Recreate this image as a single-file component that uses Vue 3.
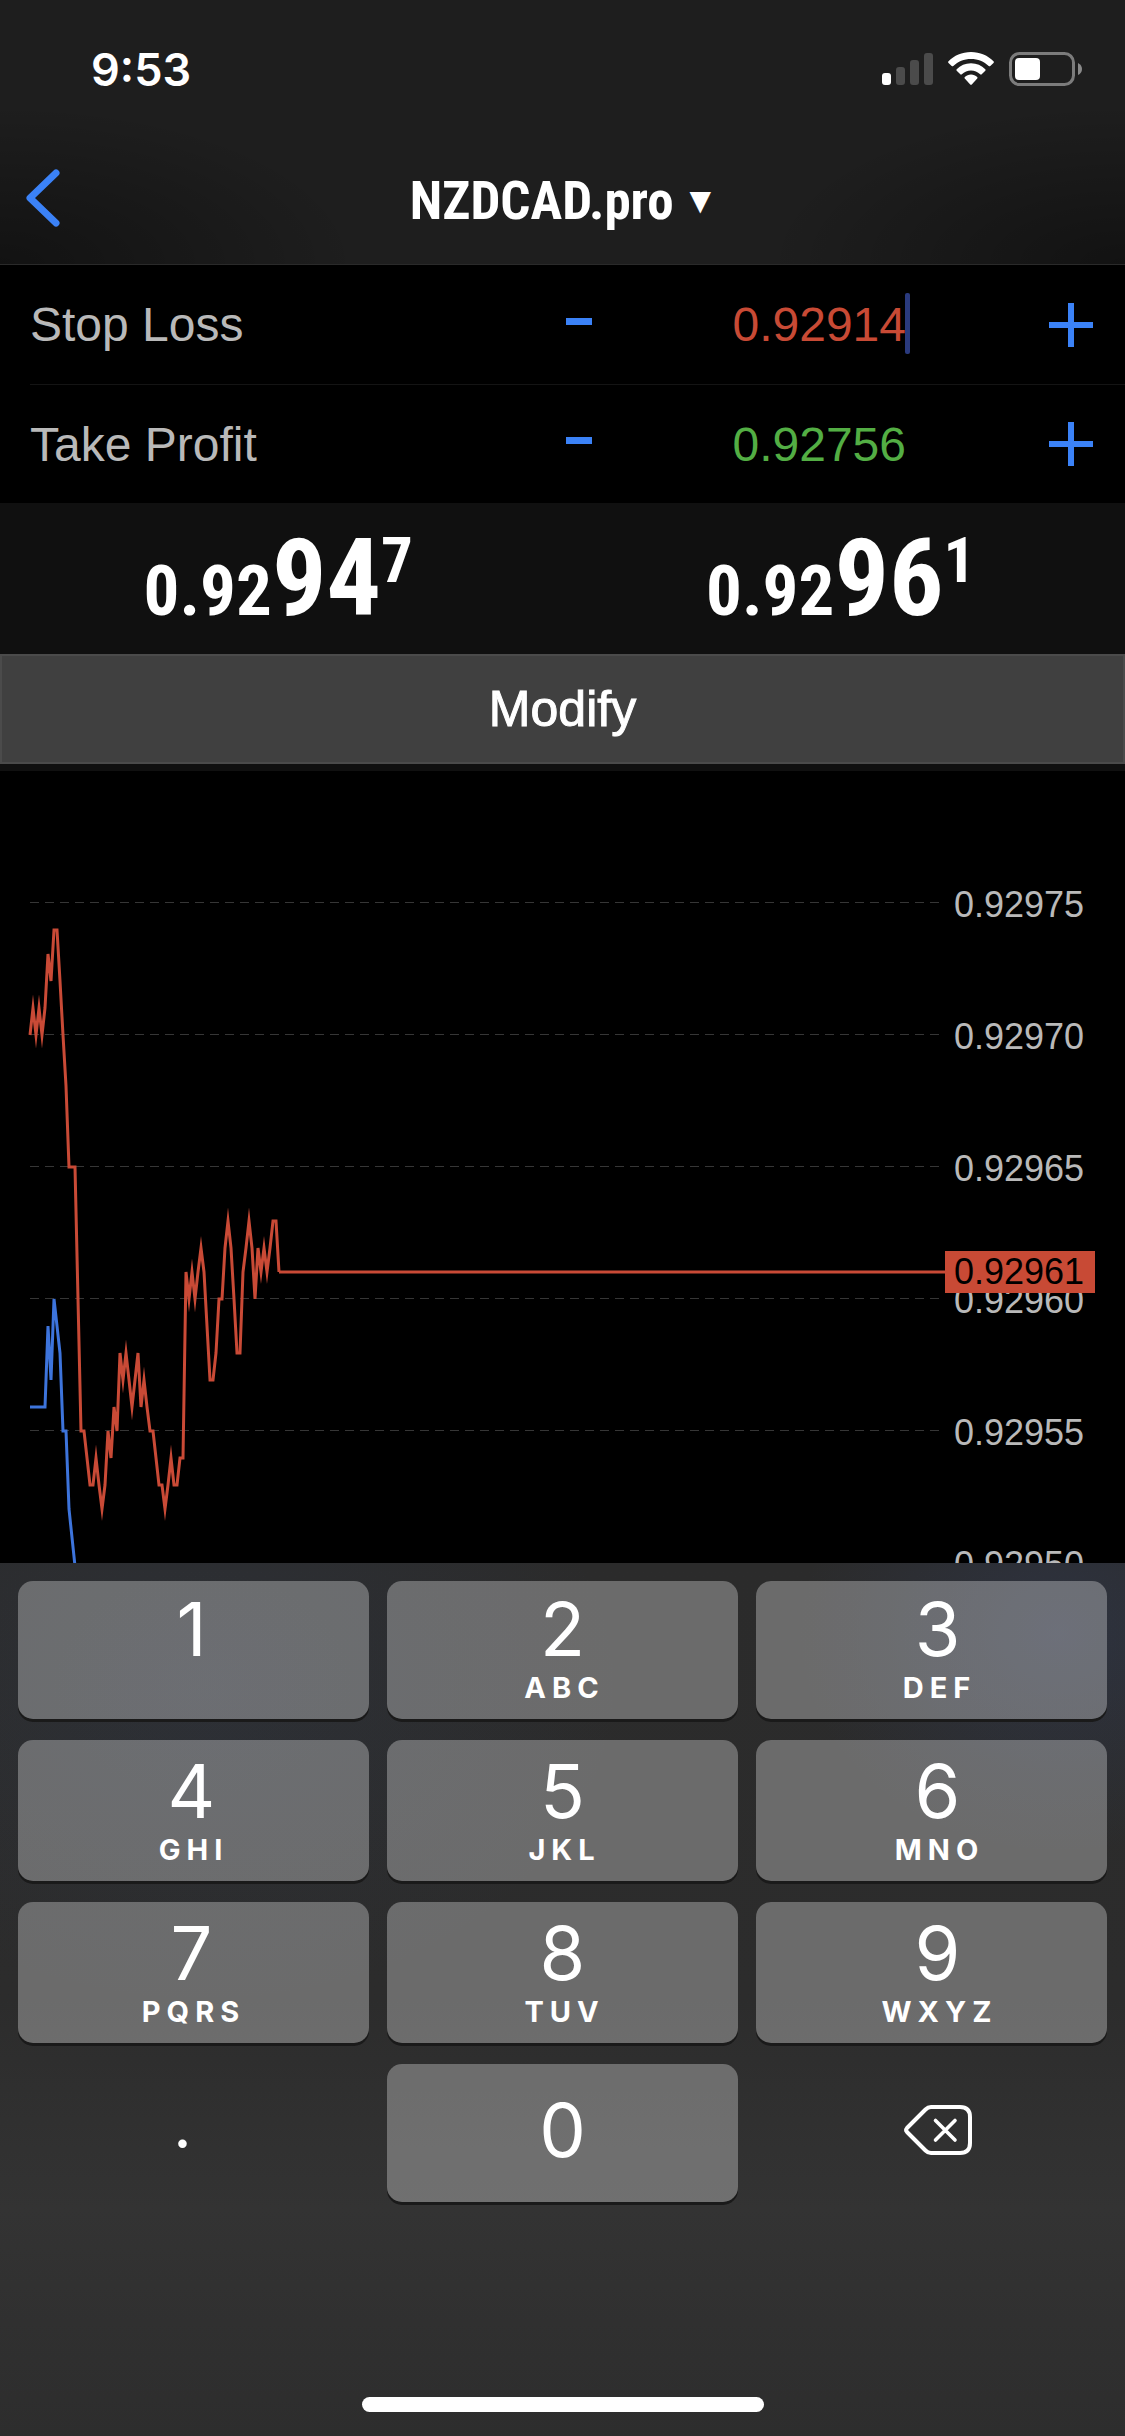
<script setup>
import { ref } from 'vue'

const stopLoss = ref('0.92914')
const takeProfit = ref('0.92756')

const STEP = 0.00001
const shift = (value, by) => (Number(value) + by * STEP).toFixed(5)

const quotes = [
  { side: 'Bid', base: '0.92', big: '94', pip: '7' },
  { side: 'Ask', base: '0.92', big: '96', pip: '1' },
]

const axis = ['0.92975', '0.92970', '0.92965', '0.92960', '0.92955', '0.92950']
const gridLines = [131, 263, 395, 527, 659]

// Vertical position inside the plot for each price level (last two digits).
const levels = {
  46: 900, 50: 795, 52: 738, 53: 714, 54: 687, 55: 660, 56: 636, 57: 609, 58: 582, 59: 555, 60: 528,
  61: 501, 62: 477, 63: 450, 65: 396, 68: 315, 70: 264, 71: 237, 72: 210, 73: 183, 74: 159,
}
const toPoints = (ticks) =>
  ticks
    .map((level, i) => (level === null ? null : `${i * 3},${levels[level]}`))
    .filter(Boolean)
    .join(' ')

const askTicks = [
  70, 71, 70, 71, 70, 71, 73, 72, 74, 74, 72, 70, 68, 65, null, 65, null, 55, 55, 54, 53, 53, 54, 53, 52, 53,
  55, 54, 56, 55, 58, 57, 58, 57, 56, 57, 58, 56, 57, 56, 55, 55, 54, 53, 53, 52, 53, 54, 53, 53, 54, 54,
  61, 60, 61, 60, 61, 62, 61, 59, 57, 57, 58, 60, 60, 62, 63, 62, 60, 58, 58, 61, 62, 63, 62, 60, 62, 61,
  62, 61, 62, 63, 63, 61,
]
const bidTicks = [56, null, null, null, null, 56, 59, 57, 60, 59, 58, 55, 55, 52, null, 50]

const askPoints = toPoints(askTicks)
const bidPoints = toPoints(bidTicks)

const keys = [
  { digit: '1', letters: '' },
  { digit: '2', letters: 'ABC' },
  { digit: '3', letters: 'DEF' },
  { digit: '4', letters: 'GHI' },
  { digit: '5', letters: 'JKL' },
  { digit: '6', letters: 'MNO' },
  { digit: '7', letters: 'PQRS' },
  { digit: '8', letters: 'TUV' },
  { digit: '9', letters: 'WXYZ' },
]

const type = (char) => {
  stopLoss.value += char
}
const erase = () => {
  stopLoss.value = stopLoss.value.slice(0, -1)
}
</script>

<template>
  <div class="screen">
    <header class="top">
      <div class="status">
        <span class="time">9:53</span>
        <div class="indicators">
          <svg width="51" height="34" viewBox="0 0 51 34" aria-label="Signal">
            <rect x="0" y="21" width="9" height="12" rx="3" fill="#fff" />
            <rect x="14" y="15" width="9" height="18" rx="3" fill="#4b4b4b" />
            <rect x="28" y="8" width="9" height="25" rx="3" fill="#4b4b4b" />
            <rect x="42" y="1" width="9" height="32" rx="3" fill="#4b4b4b" />
          </svg>
          <svg width="46" height="34" viewBox="0 0 46 34" aria-label="Wi-Fi" fill="#fff">
            <path d="M23 0C32 0 40 3.600 45.500 9.200Q46.300 10 45.500 10.900L42.300 14Q41.500 14.700 40.700 14C36 9.600 30 7 23 7S10 9.600 5.300 14Q4.500 14.700 3.700 14L.5 10.900Q-.3 10 .5 9.200C6 3.600 14 0 23 0Z" />
            <path d="M23 11.200C28.700 11.200 33.600 13.400 37.300 17.200Q38 18 37.300 18.800L33.700 22.300Q33 23 32.200 22.300C29.600 20 26.500 18.600 23 18.600S16.400 20 13.800 22.300Q13 23 12.300 22.300L8.700 18.800Q8 18 8.700 17.200C12.400 13.400 17.300 11.200 23 11.200Z" />
            <path d="M23 22.600C25.500 22.600 27.500 23.500 29.200 25Q29.900 25.700 29.200 26.500L23.800 32.400Q23 33.200 22.200 32.400L16.800 26.500Q16.100 25.700 16.800 25C18.500 23.500 20.500 22.600 23 22.600Z" />
          </svg>
          <svg width="73" height="34" viewBox="0 0 73 34" aria-label="Battery">
            <rect x="1.500" y="1.500" width="63" height="31" rx="9" fill="none" stroke="#7c7c7c" stroke-width="3" />
            <rect x="6" y="6" width="25" height="22" rx="4" fill="#fff" />
            <path d="M69 11Q73 13 73 17T69 23Z" fill="#8a8a8a" />
          </svg>
        </div>
      </div>
      <nav class="nav">
        <button class="back" type="button" aria-label="Back">
          <svg width="34" height="58" viewBox="0 0 34 58">
            <path d="M30 4L4 29L30 54" fill="none" stroke="#3b82f7" stroke-width="7" stroke-linecap="round" stroke-linejoin="round" />
          </svg>
        </button>
        <button class="symbol" type="button">NZDCAD.pro <span class="arrow">▼</span></button>
      </nav>
    </header>

    <form class="order" @submit.prevent>
      <div class="row">
        <label for="stop-loss">Stop Loss</label>
        <button class="step" type="button" aria-label="Decrease stop loss" @click="stopLoss = shift(stopLoss, -1)">
          <svg width="44" height="44" viewBox="0 0 44 44"><rect x="9" y="15" width="26" height="7" fill="#3b82f7" /></svg>
        </button>
        <div class="field">
          <input id="stop-loss" v-model="stopLoss" class="loss" inputmode="decimal" />
          <span class="caret"></span>
        </div>
        <button class="step" type="button" aria-label="Increase stop loss" @click="stopLoss = shift(stopLoss, 1)">
          <svg width="44" height="44" viewBox="0 0 44 44"><path d="M22 0V44M0 22H44" stroke="#3b82f7" stroke-width="6" /></svg>
        </button>
      </div>
      <div class="row">
        <label for="take-profit">Take Profit</label>
        <button class="step" type="button" aria-label="Decrease take profit" @click="takeProfit = shift(takeProfit, -1)">
          <svg width="44" height="44" viewBox="0 0 44 44"><rect x="9" y="15" width="26" height="7" fill="#3b82f7" /></svg>
        </button>
        <div class="field">
          <input id="take-profit" v-model="takeProfit" class="profit" inputmode="decimal" />
        </div>
        <button class="step" type="button" aria-label="Increase take profit" @click="takeProfit = shift(takeProfit, 1)">
          <svg width="44" height="44" viewBox="0 0 44 44"><path d="M22 0V44M0 22H44" stroke="#3b82f7" stroke-width="6" /></svg>
        </button>
      </div>

      <div class="quotes">
        <div v-for="q in quotes" :key="q.side" class="quote">
          <span class="base">{{ q.base }}</span><span class="big">{{ q.big }}</span><span class="pip">{{ q.pip }}</span>
        </div>
      </div>
      <div class="submit">
        <button class="modify" type="submit">Modify</button>
      </div>
    </form>

    <main class="chart">
      <svg class="plot" aria-label="Tick chart">
        <line v-for="y in gridLines" :key="y" x1="0" x2="100%" :y1="y + 0.5" :y2="y + 0.5" class="grid" />
        <polyline :points="bidPoints" class="bid" />
        <polyline :points="askPoints" class="ask" />
        <line x1="249" x2="101%" y1="501" y2="501" class="ask" />
      </svg>
      <div class="axis">
        <span v-for="price in axis" :key="price" class="mark">{{ price }}</span>
        <span class="last">0.92961</span>
      </div>
    </main>

    <section class="keyboard">
      <div class="keys">
        <button v-for="k in keys" :key="k.digit" class="key" type="button" @click="type(k.digit)">
          <span class="digit">{{ k.digit }}</span>
          <span class="letters">{{ k.letters }}</span>
        </button>
        <button class="key plain" type="button" aria-label="Decimal point" @click="type('.')">
          <span class="dot">.</span>
        </button>
        <button class="key zero" type="button" @click="type('0')"><span class="digit">0</span></button>
        <button class="key plain" type="button" aria-label="Delete" @click="erase">
          <svg width="68" height="50" viewBox="0 0 68 50" fill="none" stroke="#fff" stroke-linecap="round" stroke-linejoin="round">
            <path d="M27 2H56Q66 2 66 12V38Q66 48 56 48H27Q24 48 21.500 45.500L3 27Q1.200 25 3 23L21.500 4.500Q24 2 27 2Z" stroke-width="4" />
            <path d="M31.500 15.500L51 35M51 15.500L31.500 35" stroke-width="3.600" />
          </svg>
        </button>
      </div>
      <div class="home"></div>
    </section>
  </div>
</template>

<style>
body {
  margin: 0;
  background: #000;
}
</style>

<style scoped>
.screen {
  display: flex;
  flex-direction: column;
  min-height: 100vh;
  background: #000;
  color: #fff;
  font-family: "Liberation Sans", Arial, sans-serif;
}
button,
input {
  margin: 0;
  padding: 0;
  border: 0;
  background: none;
  color: inherit;
  font: inherit;
  outline: none;
}
svg {
  display: block;
}

.top {
  background:
    radial-gradient(ellipse 360px 160px at 0 100%, rgba(0, 0, 0, 0.4), transparent),
    radial-gradient(ellipse 360px 160px at 100% 100%, rgba(0, 0, 0, 0.4), transparent),
    #1e1e1e;
  border-bottom: 1px solid #2a2a2a;
}
.status {
  display: flex;
  align-items: center;
  justify-content: space-between;
  height: 138px;
  padding: 0 43px 0 91px;
}
.time {
  font: 600 45px/1 Inter, sans-serif;
}
.indicators {
  display: flex;
  gap: 15px;
}
.nav {
  position: relative;
  display: flex;
  align-items: center;
  justify-content: center;
  height: 126px;
  padding-right: 4px;
}
.back {
  position: absolute;
  left: 26px;
  top: 31px;
}
.symbol {
  display: flex;
  align-items: center;
  gap: 16px;
  font: 700 53px/1 "Roboto Condensed", "Liberation Sans Narrow", "Liberation Sans", sans-serif;
}
.arrow {
  font: 28px/1 "DejaVu Sans", sans-serif;
}

.row {
  display: flex;
  align-items: center;
  box-sizing: border-box;
  height: 119px;
  margin-left: 30px;
  padding-right: 32px;
  font-size: 48px;
}
.row + .row {
  border-top: 1px solid #141414;
}
.row label {
  flex: 1;
  color: #b9b9b9;
}
.field {
  position: relative;
  width: 305px;
  margin-right: 143px;
}
.field input {
  width: 100%;
  text-align: right;
}
.loss {
  color: #c84a35;
}
.profit {
  color: #53ae44;
}
.caret {
  position: absolute;
  right: -4px;
  top: -4px;
  width: 5px;
  height: 61px;
  border-radius: 2px;
  background: #2a3a7e;
}

.quotes {
  display: grid;
  grid-template-columns: 1fr 1fr;
  background: #101010;
}
.quote {
  display: flex;
  justify-content: center;
  align-items: baseline;
  height: 151px;
  padding-right: 6px;
  font: 700 71px/150px "Roboto Condensed", "Liberation Sans Narrow", "Liberation Sans", sans-serif;
}
.big {
  font-size: 108px;
}
.pip {
  align-self: flex-start;
  font-size: 63px;
  line-height: 116px;
}
.submit {
  padding-bottom: 7px;
  background: #101010;
}
.modify {
  display: block;
  width: 100%;
  height: 110px;
  border: 2px solid #4b4b4b;
  background: #404040;
  font-size: 50px;
  line-height: 104px;
  -webkit-text-stroke: 1px #fff;
}

.chart {
  flex: 1 0 792px;
  display: flex;
  padding-left: 30px;
  overflow: hidden;
}
.plot {
  flex: 1;
  height: 792px;
  overflow: visible;
}
.grid {
  stroke: #363636;
  stroke-dasharray: 9 6;
}
.ask,
.bid {
  fill: none;
  stroke: #c94a36;
  stroke-width: 3;
  stroke-miterlimit: 10;
}
.bid {
  stroke: #3d74dc;
}
.axis {
  position: relative;
  width: 186px;
  height: 792px;
  box-sizing: border-box;
  padding: 68px 0 0 15px;
  font-size: 36px;
}
.mark {
  display: block;
  color: #b9b9b9;
  line-height: 132px;
}
.last {
  position: absolute;
  left: 6px;
  top: 480px;
  width: 141px;
  padding-left: 9px;
  background: #c84a35;
  color: #000;
  line-height: 42px;
}

.keyboard {
  position: relative;
  padding: 18px 18px 24px;
  background:
    radial-gradient(ellipse 260px 220px at 94% 8%, rgba(60, 90, 170, 0.16), transparent),
    radial-gradient(ellipse 420px 320px at 18% 14%, rgba(60, 90, 150, 0.1), transparent),
    linear-gradient(#2b2b2b, #2c2c2c 50%, #333 74%, #2d2d2d);
}
.keys {
  display: grid;
  grid-template-columns: 1fr 1fr 1fr;
  grid-template-rows: 138px 141px 141px 138px;
  gap: 21px 18px;
}
.key {
  display: flex;
  flex-direction: column;
  align-items: center;
  justify-content: flex-end;
  box-sizing: border-box;
  padding-bottom: 9px;
  border-radius: 15px;
  background: rgba(255, 255, 255, 0.3);
  box-shadow: 0 3px 0 #1a1a1a;
  font-family: Inter, sans-serif;
}
.key:nth-child(3n) {
  padding-left: 12px;
}
.key:nth-child(3n + 1) {
  padding-right: 4px;
}
.digit {
  font-size: 74px;
  font-weight: 400;
  line-height: 73px;
}
.letters {
  height: 44px;
  padding-left: 4px;
  font-size: 29px;
  font-weight: 700;
  letter-spacing: 6px;
  line-height: 44px;
}
.zero,
.plain {
  justify-content: center;
  padding-bottom: 6px;
}
.plain {
  background: none;
  box-shadow: none;
}
.dot {
  padding: 0 18px 10px 0;
  font-size: 64px;
  line-height: 72px;
}
.home {
  width: 402px;
  height: 15px;
  margin: 195px auto 0;
  border-radius: 8px;
  background: #fff;
}
</style>
